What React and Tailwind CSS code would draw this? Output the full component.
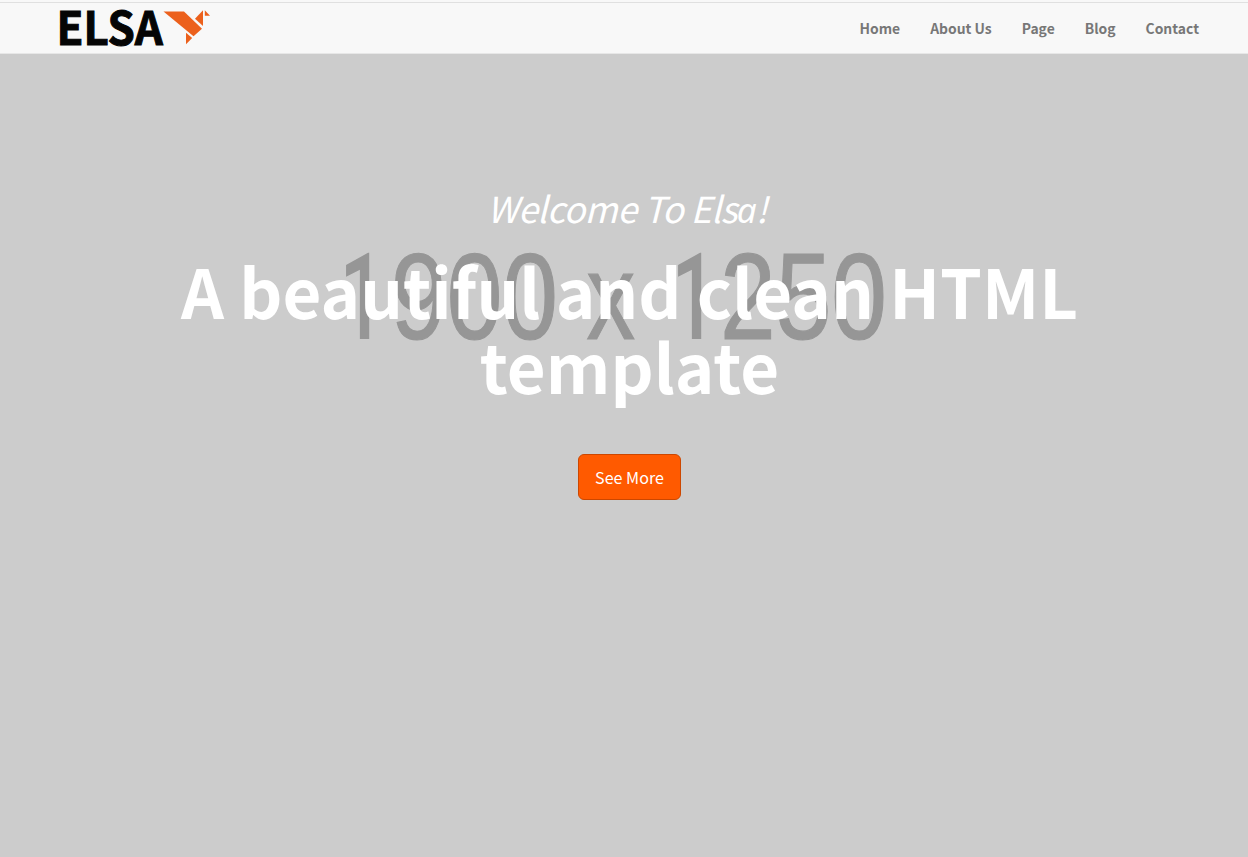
const links = ['Home', 'About Us', 'Page', 'Blog', 'Contact'];

function Logo() {
  return (
    <svg className="h-[49px] w-[160px] overflow-visible" viewBox="55 3 160 49" role="img" aria-label="ELSA">
      <text x="56.5" y="44.6" textLength="106.5" lengthAdjust="spacingAndGlyphs" fill="#050505" stroke="#050505" strokeWidth="1" className="font-['Noto_Sans_CJK_SC',sans-serif] text-[46px] font-bold">ELSA</text>
      <g fill="#ec601c">
        <path d="M163.5 11.5H184L202 28.8L193.5 36.3Z" />
        <path d="M195 18.7L203 10.3V26Z" />
        <path d="M204.8 10.3L210 15.8H204.8Z" />
        <path d="M186 32.8L192.2 38L186 44.3Z" />
      </g>
    </svg>
  );
}

function Placeholder() {
  return (
    <svg className="absolute inset-0 h-full w-full" viewBox="0 54 1248 803" fill="#969696">
      <g className="font-['Roboto',sans-serif] text-[121px] font-medium">
        <text x="339.5" y="339" textLength="45" lengthAdjust="spacingAndGlyphs">1</text>
        <text x="671.5" y="339" textLength="45" lengthAdjust="spacingAndGlyphs">1</text>
      </g>
      <g className="font-['Liberation_Sans',Arial,sans-serif] text-[123px]" stroke="#969696" strokeWidth="1.2">
        <text x="391" y="339.3" textLength="167" lengthAdjust="spacingAndGlyphs">900</text>
        <text x="586.5" y="338.5" textLength="48.5" lengthAdjust="spacingAndGlyphs">x</text>
        <text x="720" y="339.3" textLength="167" lengthAdjust="spacingAndGlyphs">250</text>
      </g>
    </svg>
  );
}

export default function App() {
  return (
    <div className="flex h-[857px] flex-col overflow-hidden bg-[#cccccc] font-['Noto_Sans_CJK_SC',sans-serif]">
      <header className="h-[54px] shrink-0 border-b border-[#e7e7e7] bg-[#f8f8f8] pt-[2px]">
        <div className="flex h-[51px] items-start justify-between border-t border-[#e0e0e0] pr-[49px] pl-[55px]">
          <Logo />
          <nav className="flex h-[49px] items-center gap-[30px] text-[13.9px] font-bold text-[#777777]">
            {links.map((label) => (
              <a key={label} href="#" className="leading-5 whitespace-nowrap">{label}</a>
            ))}
          </nav>
        </div>
      </header>
      <main className="relative flex-1">
        <Placeholder />
        <section className="relative flex flex-col items-center pt-[127px] pl-[11px] text-white">
          <p className="mr-[5px] text-[35.8px] leading-[52px] tracking-[-0.6px] italic whitespace-nowrap">
            Welcome To Els<span className="font-['Noto_Sans',sans-serif] text-[35px]">a</span>!
          </p>
          <h1 className="mt-[16px] w-[940px] text-center text-[67.1px] leading-[75px] font-bold">
            A beautiful and clean HTML template
          </h1>
          <a href="#" className="mt-[52px] flex h-[46px] w-[103px] items-center justify-center rounded-md border border-[#cc4700] bg-[#ff5a00] text-[16.1px] whitespace-nowrap">
            See More
          </a>
        </section>
      </main>
    </div>
  );
}
